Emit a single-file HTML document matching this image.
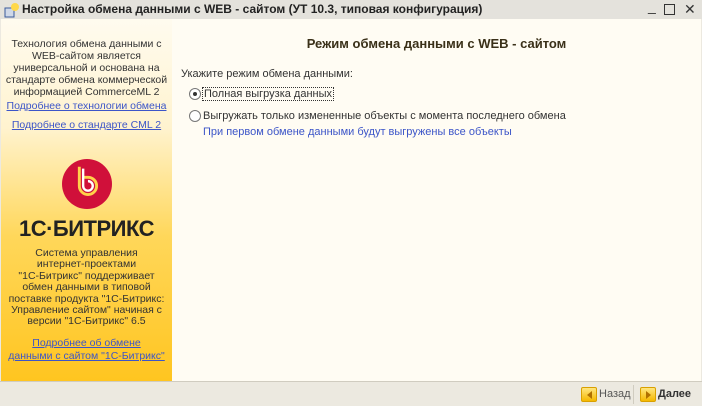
<!DOCTYPE html>
<html><head><meta charset="utf-8"><style>
*{margin:0;padding:0;box-sizing:border-box}
body{width:702px;height:406px;overflow:hidden;background:#ece9e0;font-family:"Liberation Sans","DejaVu Sans",sans-serif;font-size:11px;color:#333;position:relative}
.title{position:absolute;left:0;top:0;width:702px;height:19px;background:#e4e2dc;font-weight:bold;font-size:12px;color:#222;line-height:19px;padding-left:22px}
.wb{position:absolute;top:1px;font-size:14px;font-weight:normal;color:#333}
.left{position:absolute;left:1px;top:19px;width:171px;height:362px;background:linear-gradient(#fffbef 0%,#fff3cf 30%,#ffd75a 60%,#ffc520 100%);text-align:center;font-size:10.5px;line-height:12px;color:#333}
.right{position:absolute;left:172px;top:19px;width:529px;height:362px;background:#fffcf3}
a{color:#3c55c8;text-decoration:underline}
.bottom{position:absolute;left:0;top:381px;width:702px;height:25px;background:#ece9e0;border-top:1px solid #d0ccc0}
.p{position:absolute}
.radio{position:absolute;width:12px;height:12px;border:1px solid #777;border-radius:50%;background:#fff}
.btn{position:absolute;width:16px;height:15px;background:linear-gradient(#ffe680,#f5b800);border:1px solid #d9a000;border-radius:2px}
</style></head><body>
<div class="title">Настройка обмена данными с WEB - сайтом (УТ 10.3, типовая конфигурация)</div>
<svg class="p" style="left:3px;top:2px" width="16" height="16"><rect x="2" y="6" width="9" height="9" fill="#cfd8e8" stroke="#3a5a9a"/><circle cx="12" cy="5" r="4" fill="#ffd84a"/></svg>
<span class="wb" style="left:648px;top:-2px">_</span>
<span class="wb" style="left:664px;width:11px;height:11px;border:1.5px solid #333;top:4px"></span>
<span class="wb" style="left:684px;top:1px">✕</span>
<div class="left">
<div style="margin-top:19px">Технология обмена данными с<br>WEB-сайтом является<br>универсальной и основана на<br>стандарте обмена коммерческой<br>информацией CommerceML 2</div>
<div style="margin-top:2px"><a>Подробнее о технологии обмена</a></div>
<div style="margin-top:7px"><a>Подробнее о стандарте CML 2</a></div>
<svg style="position:absolute;left:61px;top:140px" width="50" height="50" viewBox="0 0 52 52"><circle cx="26" cy="26" r="26" fill="#d0103a"/><path d="M18 8 V28 A9 9 0 1 0 27 19 H22" fill="none" stroke="#ffd24a" stroke-width="3"/><path d="M22 10 V28 A5 5 0 1 0 27 23" fill="none" stroke="#fff" stroke-width="2.5"/></svg>
<div style="position:absolute;left:0;width:171px;top:197px;font-size:22px;font-weight:900;color:#222;line-height:26px;letter-spacing:-0.5px">1С·БИТРИКС</div>
<div style="position:absolute;left:0;width:171px;top:229px;line-height:11.4px">Система управления<br>интернет-проектами<br>"1С-Битрикс" поддерживает<br>обмен данными в типовой<br>поставке продукта "1С-Битрикс:<br>Управление сайтом" начиная с<br>версии "1С-Битрикс" 6.5</div>
<div style="position:absolute;left:0;width:171px;top:318px;line-height:12.5px"><a>Подробнее об обмене<br>данными с сайтом "1С-Битрикс"</a></div>
</div>
<div class="right">
<div class="p" style="left:0;width:529px;top:17px;text-align:center;font-size:13px;font-weight:bold;color:#3a3018">Режим обмена данными с WEB - сайтом</div>
<div class="p" style="left:9px;top:49px;font-size:11px">Укажите режим обмена данными:</div>
<div class="radio" style="left:17px;top:69px"><div style="width:4px;height:4px;background:#333;border-radius:50%;margin:3px"></div></div>
<div class="p" style="left:30px;top:68px;border:1px dotted #333;padding:0 1px">Полная выгрузка данных</div>
<div class="radio" style="left:17px;top:91px"></div>
<div class="p" style="left:31px;top:91px">Выгружать только измененные объекты с момента последнего обмена</div>
<div class="p" style="left:31px;top:107px;color:#3c55c8">При первом обмене данными будут выгружены все объекты</div>
</div>
<div class="bottom">
<div class="btn" style="left:581px;top:5px"><div style="width:0;height:0;border:4px solid transparent;border-right:5px solid #b07000;margin:3px 0 0 1px"></div></div>
<div class="p" style="left:599px;top:6px;color:#555">Назад</div>
<div class="p" style="left:633px;top:3px;width:1px;height:19px;background:#d0ccc0"></div>
<div class="btn" style="left:640px;top:5px"><div style="width:0;height:0;border:4px solid transparent;border-left:5px solid #b07000;margin:3px 0 0 5px"></div></div>
<div class="p" style="left:658px;top:6px;font-weight:bold;color:#333">Далее</div>
</div>
</body></html>
